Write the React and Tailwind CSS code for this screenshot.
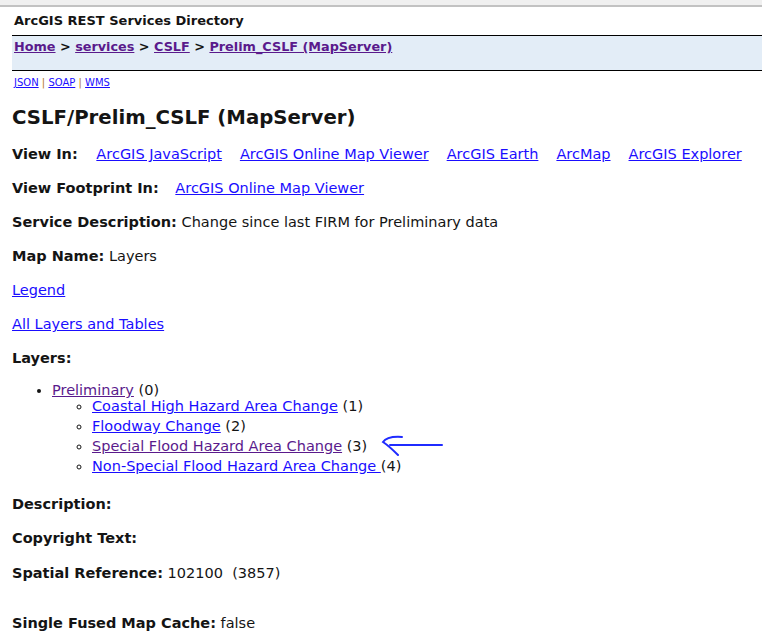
import React from "react";

const font = { fontFamily: '"DejaVu Sans", Verdana, sans-serif' };

function L({ children, visited, className = "" }) {
  return (
    <a
      href="#"
      className={`underline ${visited ? "text-[#5a1a8c]" : "text-[#1a0dff]"} ${className}`}
    >
      {children}
    </a>
  );
}

function Row({ label, children, className = "" }) {
  return (
    <div className={`h-[34px] leading-[18px] ${className}`}>
      {label && <b className="font-bold">{label}</b>} {children}
    </div>
  );
}

export default function App() {
  return (
    <div className="min-h-[638px] bg-white text-[#141414]" style={font}>
      <div className="h-[7px] bg-[#f0f0f0] border-b-2 border-[#c2c2c2]" />
      <div className="pl-[14px] pt-[6px] h-[28px] text-[13px] font-bold leading-[16px]">
        ArcGIS REST Services Directory
      </div>
      <div className="ml-[12px] h-[36px] border-y border-black bg-[#e3edf7] pl-[2px] pt-[2px] text-[12.8px] font-bold leading-[18px]">
        <L visited>Home</L> &gt; <L visited>services</L> &gt; <L visited>CSLF</L> &gt;{" "}
        <L visited>Prelim_CSLF (MapServer)</L>
      </div>
      <div className="pl-[14px] pt-[6px] h-[35px] text-[10px] leading-[12px]">
        <L>JSON</L> <span className="text-[#b0761a]">|</span> <L>SOAP</L>{" "}
        <span className="text-[#b0761a]">|</span> <L>WMS</L>
      </div>
      <div className="pl-[12px] h-[39px] text-[19.7px] font-bold leading-[24px]">
        CSLF/Prelim_CSLF (MapServer)
      </div>
      <div className="pl-[12px] text-[14.5px]">
        <Row label="View In:">
          <span className="inline-flex gap-[18px] ml-[14px]">
            <L>ArcGIS JavaScript</L>
            <L>ArcGIS Online Map Viewer</L>
            <L>ArcGIS Earth</L>
            <L>ArcMap</L>
            <L>ArcGIS Explorer</L>
          </span>
        </Row>
        <Row label="View Footprint In:">
          <L className="ml-[12px]">ArcGIS Online Map Viewer</L>
        </Row>
        <Row label="Service Description:">Change since last FIRM for Preliminary data</Row>
        <Row label="Map Name:">Layers</Row>
        <Row>
          <L>Legend</L>
        </Row>
        <Row>
          <L>All Layers and Tables</L>
        </Row>
        <div className="h-[31px] leading-[18px] font-bold">Layers:</div>
        <ul className="pl-[40px] list-disc leading-[20px]">
          <li>
            <L visited>Preliminary</L> (0)
            <ul className="pl-[40px] -mt-[4px] list-[circle]">
              <li>
                <L>Coastal High Hazard Area Change</L> (1)
              </li>
              <li>
                <L>Floodway Change</L> (2)
              </li>
              <li className="relative">
                <L visited>Special Flood Hazard Area Change</L> (3)
                <svg
                  className="absolute left-[287px] top-[-1px]"
                  width="64"
                  height="24"
                  viewBox="0 0 64 24"
                  fill="none"
                  stroke="#1f2bff"
                  strokeWidth="2"
                  strokeLinecap="round"
                >
                  <path d="M23 2 Q8 1 4 7 Q10 11 19 20" />
                  <path d="M11 10 L63 10" />
                </svg>
              </li>
              <li>
                <L>Non-Special Flood Hazard Area Change </L>(4)
              </li>
            </ul>
          </li>
        </ul>
        <div className="h-[19px]" />
        <Row label="Description:" />
        <Row label="Copyright Text:" className="h-[35px]" />
        <div className="h-[50px] leading-[18px]">
          <b>Spatial Reference:</b> 102100&nbsp; (3857)
        </div>
        <Row label="Single Fused Map Cache:">false</Row>
      </div>
    </div>
  );
}
